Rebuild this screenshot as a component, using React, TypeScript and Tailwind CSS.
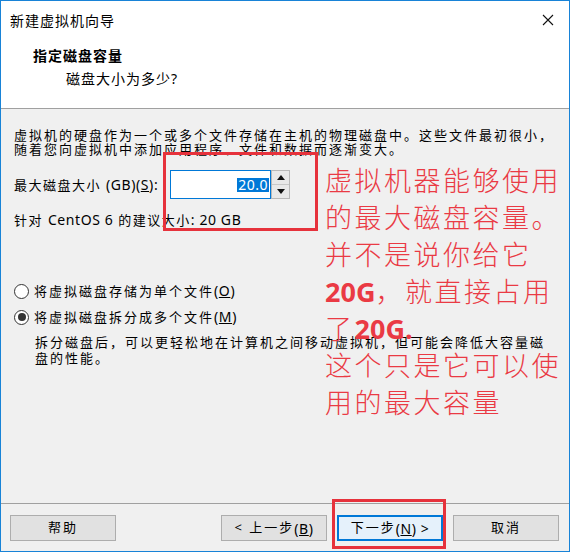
import React from "react";

const F = "font-['Noto_Sans','Noto_Sans_CJK_SC',sans-serif]";

function Btn({ children, primary }: { children: React.ReactNode; primary?: boolean }) {
  return (
    <div
      className={
        "w-[106px] h-[26px] flex items-center justify-center text-[13px] tracking-[2px] text-black " +
        (primary ? "bg-[#e5f1fb] border-2 border-[#0078d7]" : "bg-[#e1e1e1] border border-[#adadad]")
      }
    >
      {children}
    </div>
  );
}

function Radio({ checked }: { checked?: boolean }) {
  return (
    <div className="w-[15px] h-[15px] rounded-full border border-[#333] bg-white flex items-center justify-center">
      {checked && <div className="w-[8px] h-[8px] rounded-full bg-[#333]" />}
    </div>
  );
}

function L({ children }: { children: React.ReactNode }) {
  return <span className="tracking-[0.6px] text-[14px]">{children}</span>;
}

export default function App() {
  return (
    <div className={"relative w-[570px] h-[552px] border border-[#1883d7] bg-white flex flex-col text-black " + F}>
      {/* title bar */}
      <div className="h-[38px] flex items-center justify-between pl-[9px] pr-[15px] shrink-0">
        <span className="text-[14px] tracking-[1px]">新建虚拟机向导</span>
        <svg width="12" height="12" viewBox="0 0 12 12">
          <path d="M1 1 L11 11 M11 1 L1 11" stroke="#111" strokeWidth="1.1" />
        </svg>
      </div>
      {/* header */}
      <div className="h-[69px] shrink-0 pl-[32px] pt-[8px]">
        <div className="text-[14px] leading-[18px] font-bold tracking-[1px]">指定磁盘容量</div>
        <div className="text-[14px] leading-[18px] tracking-[1px] mt-[5px] pl-[33px]">磁盘大小为多少?</div>
      </div>
      <div className="h-px bg-[#a0a0a0] shrink-0" />
      {/* body */}
      <div className="flex-1 bg-[#f0f0f0] pl-[13px] pt-[19px] text-[13px] tracking-[2px]">
        <div className="leading-[14px]">
          虚拟机的硬盘作为一个或多个文件存储在主机的物理磁盘中。这些文件最初很小，
          <br />
          随着您向虚拟机中添加应用程序、文件和数据而逐渐变大。
        </div>
        <div className="mt-[14px] flex items-center h-[29px]">
          <div className="w-[156px] tracking-[1.5px]">
            最大磁盘大小 <L>(GB)(<u>S</u>):</L>
          </div>
          <div className="w-[101px] h-[29px] bg-white border border-[#0078d7] flex items-center justify-end pr-[1px]">
            <span className="bg-[#0078d7] text-white leading-[14px] tracking-[0.5px] text-[14px] px-[1px]">20.0</span>
          </div>
          <div className="w-[19px] h-[29px] flex flex-col border border-[#b8b8b8] bg-[#e8e8e8]">
            <div className="flex-1 flex items-center justify-center border-b border-[#c8c8c8]">
              <svg width="8" height="5" viewBox="0 0 8 5">
                <path d="M0 5 L4 0 L8 5 Z" fill="#111" />
              </svg>
            </div>
            <div className="flex-1 flex items-center justify-center">
              <svg width="8" height="5" viewBox="0 0 8 5">
                <path d="M0 0 L8 0 L4 5 Z" fill="#111" />
              </svg>
            </div>
          </div>
        </div>
        <div className="mt-[14px] leading-[13px] tracking-[1.5px]">
          针对 <L>CentOS 6</L> 的建议大小<L>: 20 GB</L>
        </div>
        <div className="mt-[56px] flex items-center h-[16px] leading-[16px]">
          <Radio />
          <span className="ml-[5px]">
            将虚拟磁盘存储为单个文件<L>(<u>O</u>)</L>
          </span>
        </div>
        <div className="mt-[10px] flex items-center h-[16px] leading-[16px]">
          <Radio checked />
          <span className="ml-[5px]">
            将虚拟磁盘拆分成多个文件<L>(<u>M</u>)</L>
          </span>
        </div>
        <div className="mt-[9px] pl-[21px] leading-[16px]">
          拆分磁盘后，可以更轻松地在计算机之间移动虚拟机，但可能会降低大容量磁
          <br />
          盘的性能。
        </div>
      </div>
      <div className="h-px bg-[#a0a0a0] shrink-0" />
      {/* footer */}
      <div className="h-[47px] shrink-0 bg-[#f0f0f0] flex items-start justify-between pt-[11px] pl-[9px] pr-[10px]">
        <Btn>帮助</Btn>
        <div className="flex gap-[10px]">
          <Btn>
            &lt; 上一步<L>(<u>B</u>)</L>
          </Btn>
          <Btn primary>
            下一步<L>(<u>N</u>) &gt;</L>
          </Btn>
          <Btn>取消</Btn>
        </div>
      </div>

      {/* annotations overlay */}
      <div className="absolute left-[162px] top-[151px] w-[155px] h-[79px] border-[3px] border-[#e6323c]" />
      <div className="absolute left-[331px] top-[498px] w-[114px] h-[50px] border-[3px] border-[#e6323c]" />
      <div className="absolute left-[324px] top-[161px] text-[27px] leading-[37px] tracking-[2.5px] font-light text-[#ea3a44] whitespace-nowrap">
        虚拟机器能够使用
        <br />
        的最大磁盘容量。
        <br />
        并不是说你给它
        <br />
        <b className="font-bold tracking-[0px]">20G</b>，就直接占用
        <br />
        了<b className="font-bold tracking-[0px]">20G.</b>
        <br />
        这个只是它可以使
        <br />
        用的最大容量
      </div>
    </div>
  );
}
